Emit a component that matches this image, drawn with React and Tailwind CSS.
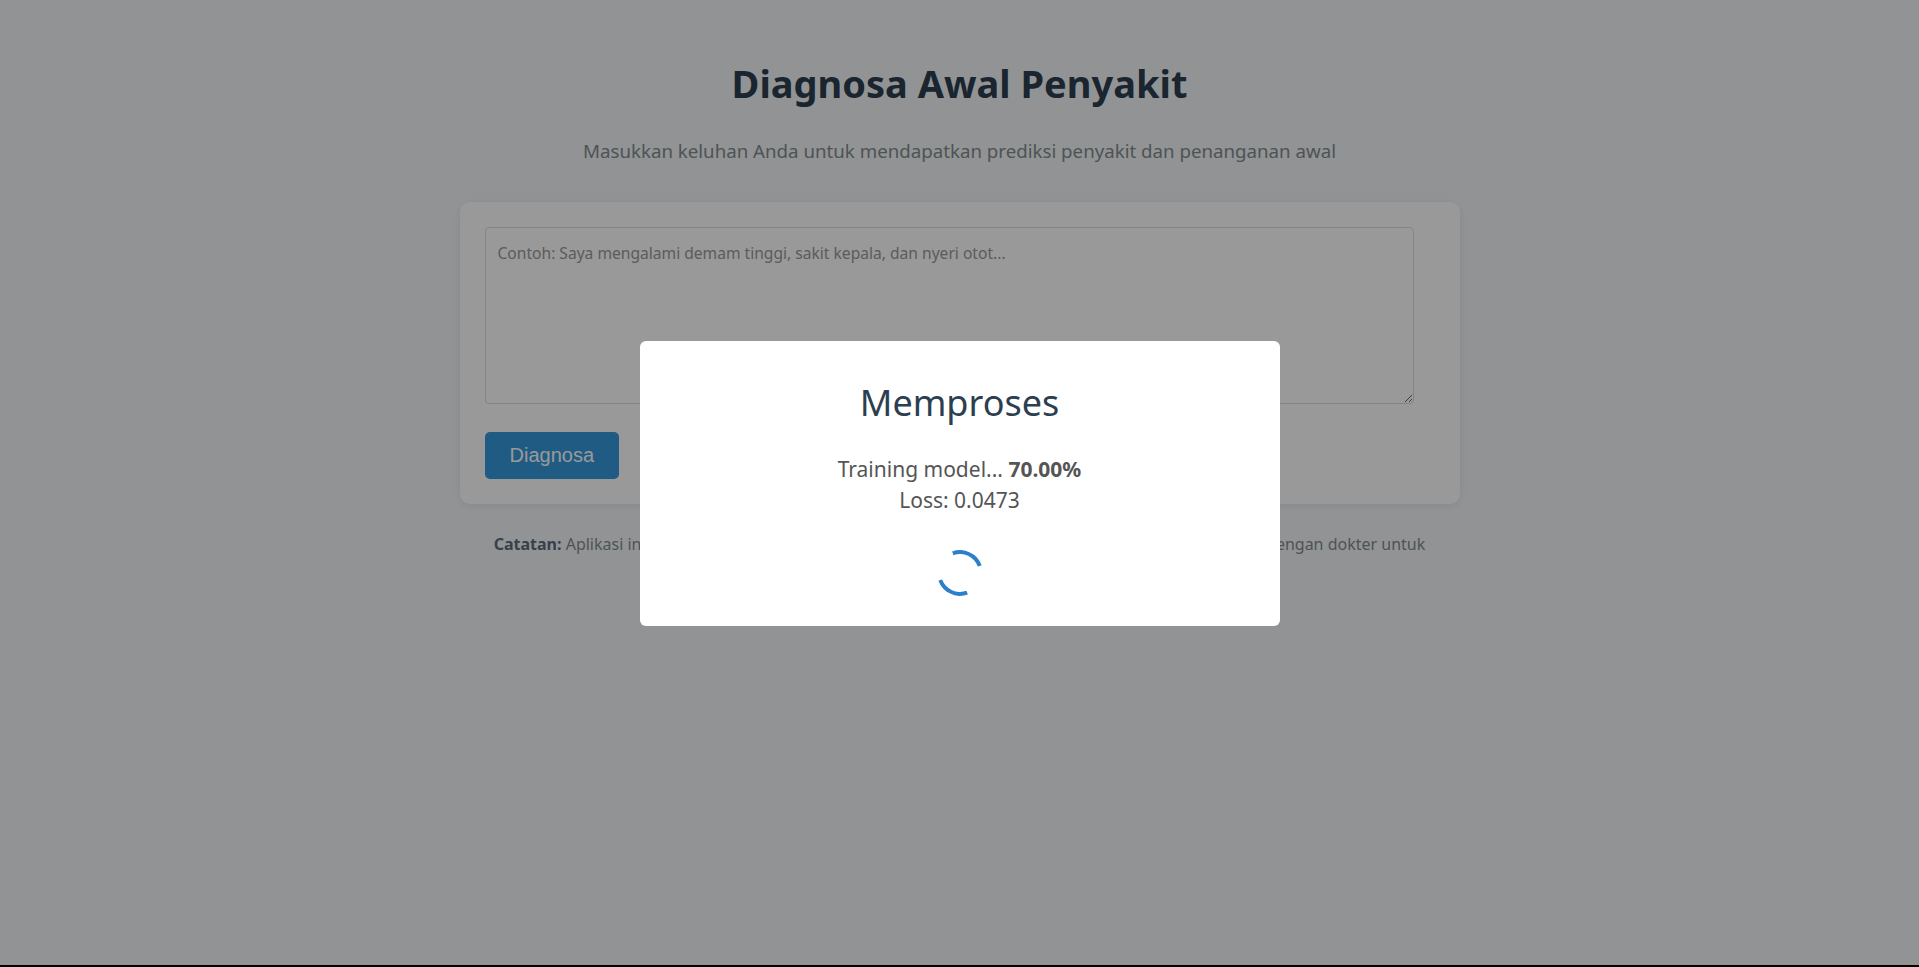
import React from 'react';

const FONT = "font-['Segoe_UI','Noto_Sans',sans-serif]";

function Spinner() {
  // static frame of the rotating border spinner
  return (
    <div className="mx-auto h-[46px] w-[46px] rotate-[25deg] rounded-full border-4 border-transparent border-t-[#2c7fcc] border-b-[#2c7fcc]" />
  );
}

export default function App() {
  return (
    <div className={`min-h-screen bg-black ${FONT}`}>
      <div className="flex h-[965px] flex-col items-center bg-[#f4f6f9] pt-[60px]">
        <h1 className="text-[38px] font-bold leading-[46px] text-[#2c3e50]">Diagnosa Awal Penyakit</h1>
        <p className="mt-[31px] text-[18.7px] leading-[27px] text-[#7f8c8d]">
          Masukkan keluhan Anda untuk mendapatkan prediksi penyakit dan penanganan awal
        </p>

        {/* Input card */}
        <div className="mt-[38px] w-[1000px] rounded-[10px] bg-white p-[25px] shadow-[0_2px_10px_rgba(0,0,0,0.08)]">
          <textarea
            className="block h-[177px] w-[929px] rounded-[4px] border border-[#dddddd] px-3 py-[14px] text-[15.6px] text-[#333] placeholder:text-[#999]"
            placeholder="Contoh: Saya mengalami demam tinggi, sakit kepala, dan nyeri otot..."
          />
          <button className="mt-[28px] rounded-[5px] bg-[#3498db] px-[25px] py-3 font-['Liberation_Sans',Arial,sans-serif] text-[20px] leading-[23px] text-white">
            Diagnosa
          </button>
        </div>

        <p className="mt-[28px] text-center text-[16px] leading-[24px] text-[#7f8c8d]">
          <span className="whitespace-nowrap">
            <strong className="text-[#5d6d7e]">Catatan:</strong> Aplikasi ini memberikan prediksi dan bukan pengganti diagnosis medis. Selalu konsultasikan dengan dokter untuk
          </span>
          <br />
          penanganan yang tepat.
        </p>
      </div>

      {/* Loading modal */}
      <div className="fixed inset-0 flex items-center justify-center bg-black/40">
        <div className="w-[640px] rounded-md bg-white p-[30px] text-center">
          <h2 className="mt-[10px] text-[36px] leading-[43px] text-[#2c3e50]">Memproses</h2>
          <div className="mt-[30px] text-[21px] leading-[31px] text-[#555]">
            <div>
              Training model... <strong>70.00%</strong>
            </div>
            <div>Loss: 0.0473</div>
          </div>
          <div className="mt-[34px]">
            <Spinner />
          </div>
        </div>
      </div>
    </div>
  );
}
